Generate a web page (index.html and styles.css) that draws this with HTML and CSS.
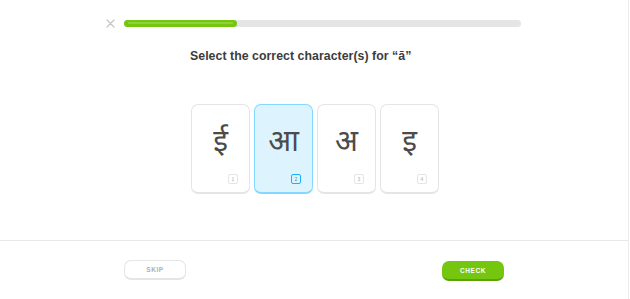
FILE: index.html
```html
<!DOCTYPE html>
<html>
<head>
<meta charset="utf-8">
<link rel="stylesheet" href="styles.css">
</head>
<body>
<div class="page">
  <div class="main">
    <div class="topbar">
      <svg class="close" width="9" height="9" viewBox="0 0 9 9"><path d="M1 1L8 8M8 1L1 8" stroke="#c4c4c4" stroke-width="1.2" stroke-linecap="round"/></svg>
      <div class="progress"><div class="fill" style="width:28.5%"></div></div>
    </div>
    <h1 class="title">Select the correct character(s) for “ā”</h1>
    <div class="cards">
      <div class="card"><span class="glyph">ई</span><span class="num">1</span></div>
      <div class="card selected"><span class="glyph">आ</span><span class="num">2</span></div>
      <div class="card"><span class="glyph">अ</span><span class="num">3</span></div>
      <div class="card"><span class="glyph">इ</span><span class="num">4</span></div>
    </div>
  </div>
  <div class="footer">
    <button class="btn skip">SKIP</button>
    <button class="btn check">CHECK</button>
  </div>
</div>
</body>
</html>
```
FILE: styles.css
```css
html, body { margin: 0; padding: 0; background: #fff; }
body { font-family: "Noto Sans", "Liberation Sans", sans-serif; width: 630px; height: 299px; overflow: hidden; }
.page { width: 629px; height: 299px; border-right: 1px solid #ececec; box-sizing: border-box; display: flex; flex-direction: column; }
.main { height: 241px; border-bottom: 1px solid #e8e8e8; box-sizing: border-box; }
.topbar { display: flex; align-items: center; padding: 19px 0 0 106px; height: 9px; gap: 9px; }
.close { display: block; }
.progress { width: 397px; height: 7px; background: #e5e5e5; border-radius: 4px; }
.fill { height: 7px; background: #74c70e; border-radius: 4px; position: relative; }
.fill::after { content: ""; position: absolute; left: 4px; right: 4px; top: 1.5px; height: 2px; border-radius: 1px; background: rgba(255,255,255,0.2); }
.title { margin: 18px 0 0 190px; font-family: "Liberation Sans", sans-serif; font-size: 12.3px; font-weight: bold; color: #3c3c3c; line-height: 20px; letter-spacing: 0.05px; }
.cards { display: flex; gap: 4px; margin: 38px 0 0 191px; }
.card { width: 59px; height: 90px; box-sizing: border-box; border: 1.5px solid #e5e5e5; border-bottom-width: 2.5px; border-radius: 7px; display: flex; flex-direction: column; align-items: center; position: relative; background: #fff; }
.card.selected { background: #ddf4ff; border-color: #84d8ff; }
.glyph { font-family: "Noto Sans Devanagari", "Lohit Devanagari", "FreeSans", sans-serif; font-size: 30px; color: #4b4b4b; line-height: 40px; margin-top: 19px; }
.num { position: absolute; right: 11px; bottom: 8px; width: 10px; height: 10px; box-sizing: border-box; border: 1px solid #e5e5e5; border-radius: 2px; font-size: 5px; line-height: 8px; text-align: center; color: #afafaf; font-family: "Liberation Sans", sans-serif; }
.selected .num { border-color: #1cb0f6; color: #1899d6; }
.footer { flex: 1; display: flex; justify-content: space-between; align-items: flex-start; padding: 19px 124px 0 124px; }
.btn { width: 62px; height: 20px; border-radius: 7px; font-family: "Liberation Sans", sans-serif; font-weight: bold; font-size: 6.5px; letter-spacing: 0.6px; padding: 0; box-sizing: border-box; }
.skip { background: #fff; border: 1.5px solid #e5e5e5; border-bottom-width: 2.5px; color: #afafaf; }
.check { margin-top: 1px; background: #74c70e; border: none; border-bottom: 2.5px solid #5aa307; color: #fff; }
```
